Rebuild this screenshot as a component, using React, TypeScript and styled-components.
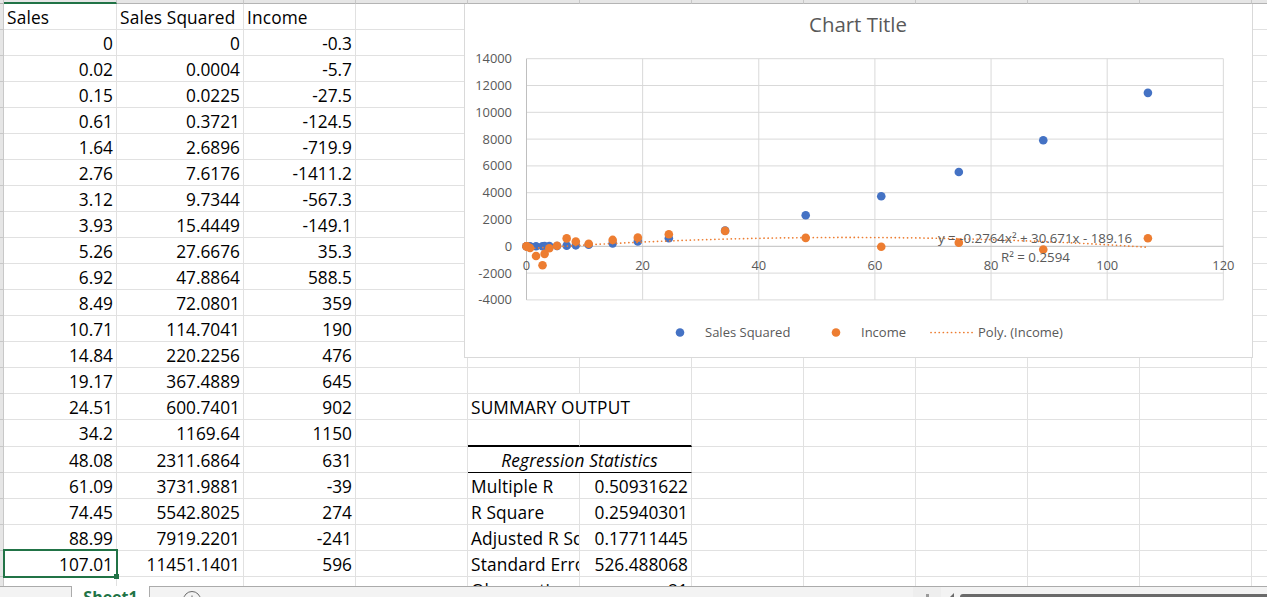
import React from 'react';
import styled, { createGlobalStyle } from 'styled-components';

const GRID_COLUMNS = '4px 113px 127px 112px 112px 112px 112px 112px 112px 112px 112px 112px 112px';
const SHEET_FONT = '"Open Sans", "Noto Sans", "Liberation Sans", sans-serif';

const Global = createGlobalStyle`
  html, body { margin: 0; padding: 0; background: #fff; overflow: hidden; }
`;

const Page = styled.div`
  width: 1267px;
  height: 597px;
  display: flex;
  flex-direction: column;
  overflow: hidden;
  font-family: ${SHEET_FONT};
  background: #fff;
`;

const ColumnHeaders = styled.div`
  flex: none;
  height: 4px;
  display: grid;
  grid-template-columns: ${GRID_COLUMNS};
  background: #e6e6e6;
`;

const ColumnHead = styled.div<{ $active?: boolean }>`
  box-sizing: border-box;
  border-right: 1px solid #c8c8c8;
  border-bottom: ${(p) => (p.$active ? '2px solid #217346' : '1px solid #b4b4b4')};
`;

const SheetArea = styled.div`
  flex: 1;
  min-height: 0;
  position: relative;
  overflow: hidden;
`;

const Grid = styled.div`
  display: grid;
  grid-template-columns: ${GRID_COLUMNS};
  grid-template-rows: repeat(16, 26px) 27px repeat(6, 26px);
  width: max-content;
`;

const RowHead = styled.div`
  box-sizing: border-box;
  background: #e6e6e6;
  border-right: 1px solid #c8c8c8;
  border-bottom: 1px solid #c8c8c8;
`;

const Cell = styled.div<{
  $numeric?: boolean;
  $rule?: 'heavy' | 'thin';
  $selected?: boolean;
  $span?: boolean;
  $centered?: boolean;
  $italic?: boolean;
}>`
  box-sizing: border-box;
  position: relative;
  display: flex;
  align-items: center;
  justify-content: ${(p) => (p.$numeric ? 'flex-end' : p.$centered ? 'center' : 'flex-start')};
  padding: 2px 3px 0 3px;
  font-size: 17.3px;
  letter-spacing: ${(p) => (p.$numeric ? '0' : '0.15px')};
  font-style: ${(p) => (p.$italic ? 'italic' : 'normal')};
  line-height: 22px;
  color: #000;
  white-space: nowrap;
  overflow: ${(p) => (p.$selected ? 'visible' : 'hidden')};
  border-right: 1px solid #e1e1e1;
  border-bottom: ${(p) =>
    p.$rule === 'heavy' ? '2px solid #000' : p.$rule === 'thin' ? '1px solid #000' : '1px solid #e1e1e1'};
  grid-column: ${(p) => (p.$span ? 'span 2' : 'auto')};
  ${(p) =>
    p.$selected
      ? `
    &::after {
      content: '';
      position: absolute;
      top: -2px;
      left: -1px;
      right: -2px;
      bottom: -2px;
      border: 2px solid #217346;
      pointer-events: none;
    }
    &::before {
      content: '';
      position: absolute;
      right: -3px;
      bottom: -3px;
      width: 5px;
      height: 5px;
      background: #217346;
      z-index: 1;
    }
  `
      : ''}
`;

const ChartFrame = styled.div`
  position: absolute;
  left: 464px;
  top: 0;
  width: 789px;
  height: 354px;
  box-sizing: border-box;
  background: #fff;
  border: 1px solid #d9d9d9;
  border-top: 0;
`;

const ChartSvg = styled.svg`
  display: block;
`;

const GridLine = styled.line`
  stroke: #d9d9d9;
  stroke-width: 1;
`;

const AxisLine = styled.line`
  stroke: #bfbfbf;
  stroke-width: 1;
`;

const ChartText = styled.text`
  font-family: ${SHEET_FONT};
  fill: #595959;
`;

const AxisLabel = styled(ChartText)`
  font-size: 12.9px;
`;

const LegendLabel = styled(ChartText)`
  font-size: 13px;
`;

const TitleLabel = styled(ChartText)`
  font-size: 20.4px;
`;

const TrendLabel = styled(ChartText)`
  font-size: 13.3px;
`;

const Trend = styled.path`
  fill: none;
  stroke: #ed7d31;
  stroke-width: 1.7;
  stroke-linecap: round;
  stroke-dasharray: 0.1 4;
`;

const StatusBar = styled.div`
  flex: none;
  height: 11px;
  box-sizing: border-box;
  display: flex;
  background: #f3f3f3;
  overflow: hidden;
`;

const TabNav = styled.div`
  flex: none;
  width: 72px;
  box-sizing: border-box;
  border-top: 1px solid #ababab;
  border-right: 1px solid #ababab;
`;

const ActiveTab = styled.div`
  flex: none;
  width: 77px;
  background: #fff;
  color: #217346;
  font-weight: 700;
  font-size: 16px;
  line-height: 18px;
  padding-top: 2px;
  text-align: center;
  box-sizing: border-box;
`;

const TabStrip = styled.div`
  flex: 1;
  display: flex;
  box-sizing: border-box;
  border-top: 1px solid #ababab;
  border-left: 1px solid #ababab;
`;

const AddSheet = styled.svg`
  flex: none;
  margin: 4px 0 0 33px;
  overflow: visible;
`;

const Splitter = styled.div`
  flex: none;
  position: relative;
  width: 28px;
  margin-left: 712px;
  background: #eeeeee;
  &::after {
    content: '';
    position: absolute;
    left: 13px;
    bottom: 0;
    width: 3px;
    height: 3px;
    background: #9a9a9a;
  }
`;

const ArrowGlyph = styled.svg`
  flex: none;
  margin: 6px 0 0 8px;
`;

const ScrollThumb = styled.div`
  flex: 1;
  margin: 7px 0 0 5px;
  background: #6a6a6a;
  border-radius: 3px 0 0 0;
`;

const sales: [string, string, string][] = [
  ['0', '0', '-0.3'],
  ['0.02', '0.0004', '-5.7'],
  ['0.15', '0.0225', '-27.5'],
  ['0.61', '0.3721', '-124.5'],
  ['1.64', '2.6896', '-719.9'],
  ['2.76', '7.6176', '-1411.2'],
  ['3.12', '9.7344', '-567.3'],
  ['3.93', '15.4449', '-149.1'],
  ['5.26', '27.6676', '35.3'],
  ['6.92', '47.8864', '588.5'],
  ['8.49', '72.0801', '359'],
  ['10.71', '114.7041', '190'],
  ['14.84', '220.2256', '476'],
  ['19.17', '367.4889', '645'],
  ['24.51', '600.7401', '902'],
  ['34.2', '1169.64', '1150'],
  ['48.08', '2311.6864', '631'],
  ['61.09', '3731.9881', '-39'],
  ['74.45', '5542.8025', '274'],
  ['88.99', '7919.2201', '-241'],
  ['107.01', '11451.1401', '596'],
];

const stats: Record<number, [string, string]> = {
  19: ['Multiple R', '0.50931622'],
  20: ['R Square', '0.25940301'],
  21: ['Adjusted R Square', '0.17711445'],
  22: ['Standard Error', '526.488068'],
  23: ['Observations', '21'],
};

const px = (x: number) => 526.5 + x * 5.807;
const py = (y: number) => 246.3 - (y * 26.8) / 2000;

const trendPath = Array.from({ length: 108 }, (_, i) => {
  const x = i;
  const y = -0.2764 * x * x + 30.671 * x - 189.16;
  return `${i === 0 ? 'M' : 'L'}${px(x).toFixed(1)} ${py(y).toFixed(1)}`;
}).join(' ');

const Chart = () => (
  <ChartFrame>
    <ChartSvg width={788} height={353} viewBox="465 4 788 353">
      {[14000, 12000, 10000, 8000, 6000, 4000, 2000, -2000, -4000].map((v) => (
        <GridLine key={v} x1={px(0)} x2={px(120)} y1={py(v)} y2={py(v)} />
      ))}
      {[20, 40, 60, 80, 100, 120].map((v) => (
        <GridLine key={v} x1={px(v)} x2={px(v)} y1={py(14000)} y2={py(-4000)} />
      ))}
      <AxisLine x1={px(0)} x2={px(0)} y1={py(14000)} y2={py(-4000)} />
      <AxisLine x1={px(0)} x2={px(120)} y1={py(0)} y2={py(0)} />

      {[14000, 12000, 10000, 8000, 6000, 4000, 2000, 0, -2000, -4000].map((v) => (
        <AxisLabel key={v} x={512} y={py(v) + 4.5} textAnchor="end">
          {v}
        </AxisLabel>
      ))}
      {[0, 20, 40, 60, 80, 100, 120].map((v) => (
        <AxisLabel key={v} x={px(v)} y={269.5} textAnchor="middle">
          {v}
        </AxisLabel>
      ))}

      {sales.map(([x, y]) => (
        <circle key={x} cx={px(+x)} cy={py(+y)} r={4.3} fill="#4472c4" />
      ))}
      <Trend d={trendPath} />
      {sales.map(([x, , y]) => (
        <circle key={x} cx={px(+x)} cy={py(+y)} r={4.3} fill="#ed7d31" />
      ))}

      <TitleLabel x={858} y={32} textAnchor="middle">
        Chart Title
      </TitleLabel>
      <TrendLabel x={938} y={243}>
        y = -0.2764x² + 30.671x - 189.16
      </TrendLabel>
      <TrendLabel x={1001} y={262}>
        R² = 0.2594
      </TrendLabel>

      <circle cx={680} cy={332.5} r={4.3} fill="#4472c4" />
      <LegendLabel x={705} y={337}>
        Sales Squared
      </LegendLabel>
      <circle cx={836} cy={332.5} r={4.3} fill="#ed7d31" />
      <LegendLabel x={861} y={337}>
        Income
      </LegendLabel>
      <Trend d="M931 332.5 L973 332.5" />
      <LegendLabel x={978} y={337}>
        Poly. (Income)
      </LegendLabel>
    </ChartSvg>
  </ChartFrame>
);

const columnLetters = Array.from({ length: 13 }, (_, i) => i);
const fillerColumns = [0, 1, 2, 3, 4, 5];

const SheetRow = ({ index }: { index: number }) => {
  const data = index >= 2 && index <= 22 ? sales[index - 2] : undefined;
  const stat = stats[index];
  return (
    <>
      <RowHead />
      {index === 1 ? (
        <>
          <Cell>Sales</Cell>
          <Cell>Sales Squared</Cell>
          <Cell>Income</Cell>
        </>
      ) : data ? (
        <>
          <Cell $numeric $selected={index === 22}>
            {data[0]}
          </Cell>
          <Cell $numeric>{data[1]}</Cell>
          <Cell $numeric>{data[2]}</Cell>
        </>
      ) : (
        <>
          <Cell />
          <Cell />
          <Cell />
        </>
      )}
      <Cell />
      {index === 16 ? (
        <Cell $span>SUMMARY OUTPUT</Cell>
      ) : index === 17 ? (
        <>
          <Cell $rule="heavy" />
          <Cell $rule="heavy" />
        </>
      ) : index === 18 ? (
        <Cell $span $centered $italic $rule="thin">
          Regression Statistics
        </Cell>
      ) : stat ? (
        <>
          <Cell>{stat[0]}</Cell>
          <Cell $numeric>{stat[1]}</Cell>
        </>
      ) : (
        <>
          <Cell />
          <Cell />
        </>
      )}
      {fillerColumns.map((c) => (
        <Cell key={c} />
      ))}
    </>
  );
};

export default function App() {
  return (
    <Page>
      <Global />
      <ColumnHeaders>
        {columnLetters.map((c) => (
          <ColumnHead key={c} $active={c === 1} />
        ))}
      </ColumnHeaders>
      <SheetArea>
        <Grid>
          {Array.from({ length: 23 }, (_, i) => (
            <SheetRow key={i} index={i + 1} />
          ))}
        </Grid>
        <Chart />
      </SheetArea>
      <StatusBar>
        <TabNav />
        <ActiveTab>Sheet1</ActiveTab>
        <TabStrip>
          <AddSheet width={18} height={18} viewBox="0 0 18 18">
            <circle cx={9} cy={9} r={8.5} fill="none" stroke="#6a6a6a" strokeWidth={1} />
            <path d="M9 4.5v9M4.5 9h9" stroke="#6a6a6a" strokeWidth={1} />
          </AddSheet>
          <Splitter />
          <ArrowGlyph width={6} height={5} viewBox="0 0 6 5">
            <path d="M0 5 L5 0 L5 5 Z" fill="#6a6a6a" />
          </ArrowGlyph>
          <ScrollThumb />
        </TabStrip>
      </StatusBar>
    </Page>
  );
}
